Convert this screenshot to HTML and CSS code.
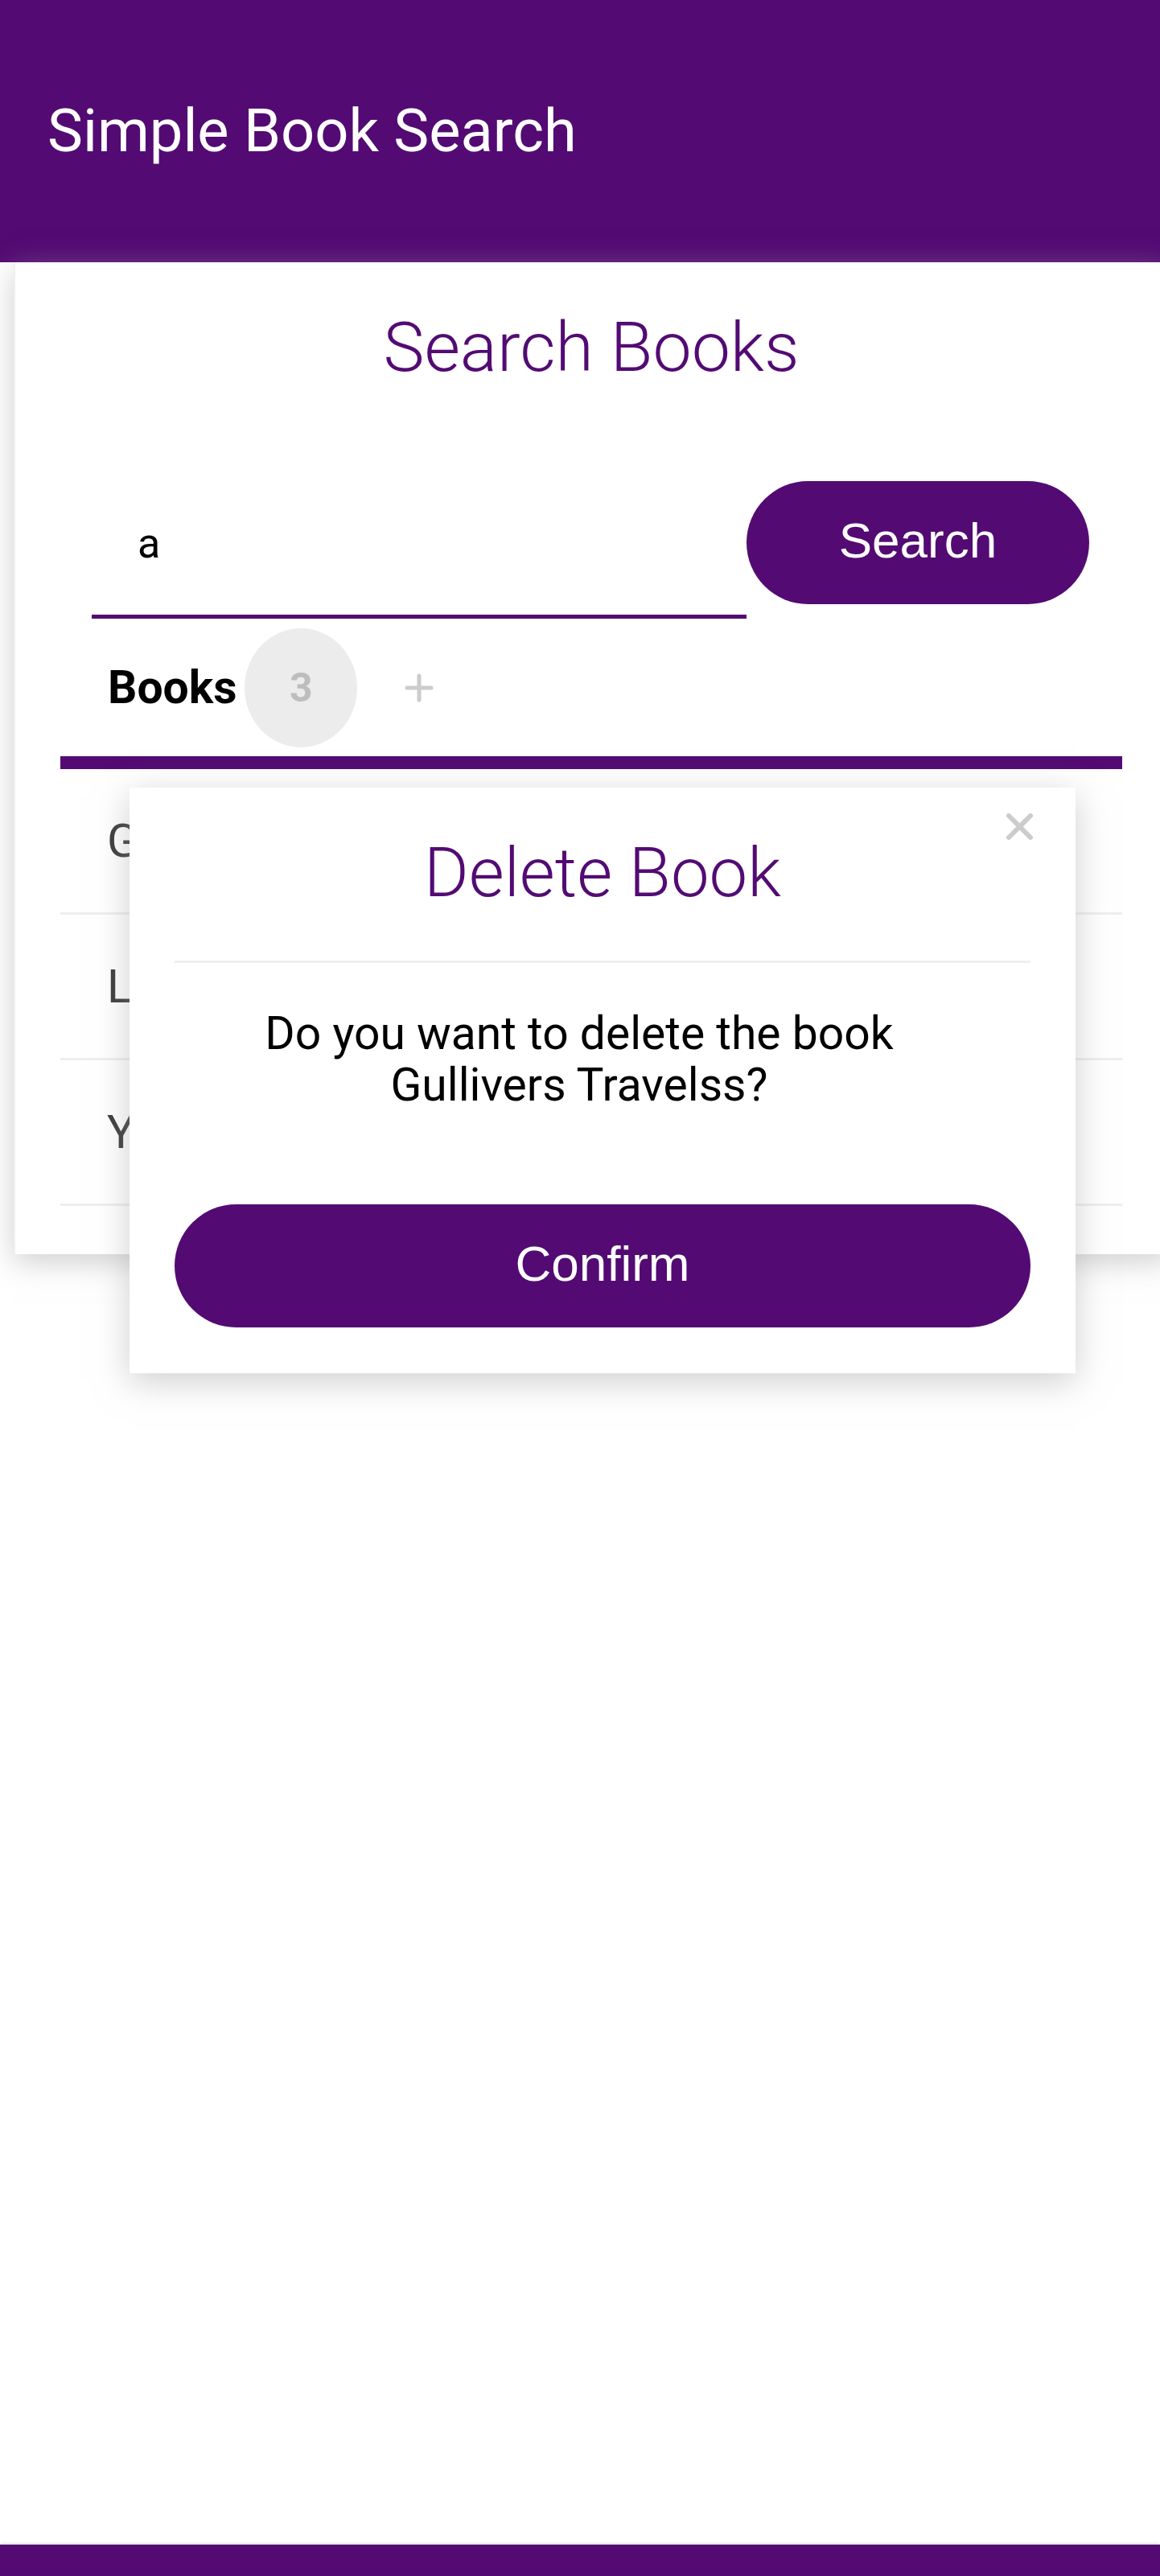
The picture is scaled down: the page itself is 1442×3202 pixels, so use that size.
FILE: index.html
```html
<!DOCTYPE html>
<html lang="en">
<head>
<meta charset="utf-8">
<title>Simple Book Search</title>
<link rel="stylesheet" href="styles.css">
</head>
<body>
<div class="page">
  <header class="topbar">
    <h1 class="app-title">Simple Book Search</h1>
  </header>

  <main class="card">
    <h2 class="card-title">Search Books</h2>
    <form class="search-row">
      <input class="search-input" type="text" value="a">
      <button class="pill-btn search-btn" type="button">Search</button>
    </form>

    <div class="tabs">
      <span class="tab-label">Books</span>
      <span class="badge">3</span>
      <span class="tab-add">
        <svg width="36" height="36" viewBox="0 0 36 36"><path d="M18 3v30M3 18h30" stroke="#cccccc" stroke-width="5" stroke-linecap="round" fill="none"/></svg>
      </span>
    </div>
    <div class="tab-indicator"></div>

    <ul class="book-list">
      <li class="book-row">Gullivers Travelss</li>
      <li class="book-row">Les Miserables</li>
      <li class="book-row">Yellow Crayon</li>
    </ul>
  </main>

  <div class="modal">
    <button class="modal-close" type="button" aria-label="Close">
      <svg width="35" height="35" viewBox="0 0 35 35"><path d="M4 4l27 27M31 4L4 31" stroke="#cccccc" stroke-width="6" stroke-linecap="round" fill="none"/></svg>
    </button>
    <h3 class="modal-title">Delete Book</h3>
    <hr class="modal-divider">
    <p class="modal-message">Do you want to delete the book<br>Gullivers Travelss?</p>
    <button class="pill-btn confirm-btn" type="button">Confirm</button>
  </div>

  <footer class="bottombar"></footer>
</div>
</body>
</html>
```

FILE: styles.css
```css
html, body {
  margin: 0;
  padding: 0;
  background: #ffffff;
  overflow-x: hidden;
}

body {
  font-family: Roboto, "Noto Sans", sans-serif;
}

.page {
  position: relative;
  min-height: 3202px;
  display: flex;
  flex-direction: column;
}

.topbar {
  height: 326px;
  background: #530b73;
  display: flex;
  align-items: center;
  padding-left: 59px;
  box-sizing: border-box;
}

.app-title {
  margin: 0;
  font-family: Roboto, sans-serif;
  font-weight: 400;
  font-size: 74px;
  color: #ffffff;
  line-height: 1;
}

.card {
  width: 1436px;
  margin-left: 17px;
  box-sizing: border-box;
  padding: 62px 58px 60px 56px;
  background: #ffffff;
  border-left: 2px solid #efefef;
  box-shadow: 0 10px 34px rgba(170, 170, 170, 0.55);
}

.card-title {
  margin: 0;
  text-align: center;
  font-family: Roboto, sans-serif;
  font-weight: 300;
  font-size: 86px;
  line-height: 87px;
  color: #530b73;
}

.search-row {
  margin: 123px 41px 0 39px;
  display: flex;
  align-items: flex-start;
}

.search-input {
  flex: 1;
  height: 171px;
  box-sizing: border-box;
  border: none;
  border-bottom: 5px solid #530b73;
  padding: 0 0 12px 57px;
  margin: 0;
  font-family: Roboto, sans-serif;
  font-size: 52px;
  color: #000000;
  background: transparent;
  outline: none;
}

.pill-btn {
  height: 153px;
  border: none;
  border-radius: 77px;
  background: #530b73;
  color: #ffffff;
  font-family: "Liberation Sans", Arial, sans-serif;
  font-size: 62px;
  padding: 0 0 6px;
  margin: 0;
  cursor: pointer;
}

.search-btn {
  width: 426px;
  flex: none;
}

.tabs {
  height: 171px;
  display: flex;
  align-items: center;
  padding-left: 59px;
}

.tab-label {
  font-family: Roboto, sans-serif;
  font-weight: 700;
  font-size: 57px;
  color: #000000;
}

.badge {
  width: 140px;
  height: 148px;
  margin-left: 10px;
  border-radius: 50%;
  background: #ececec;
  color: #bdbdbd;
  font-family: Roboto, sans-serif;
  font-weight: 700;
  font-size: 50px;
  display: flex;
  align-items: center;
  justify-content: center;
}

.tab-add {
  margin-left: 59px;
  display: flex;
}

.tab-indicator {
  height: 16px;
  background: #530b73;
}

.book-list {
  list-style: none;
  margin: 0;
  padding: 0;
}

.book-row {
  height: 181px;
  box-sizing: border-box;
  border-bottom: 3px solid #eeeeee;
  display: flex;
  align-items: center;
  padding-left: 58px;
  font-family: Roboto, sans-serif;
  font-size: 58px;
  color: #3a3a3a;
}

.modal {
  position: absolute;
  left: 161px;
  top: 979px;
  width: 1176px;
  box-sizing: border-box;
  padding: 0 56px 57px;
  background: #ffffff;
  box-shadow: 0 10px 40px rgba(160, 160, 160, 0.5);
  display: flex;
  flex-direction: column;
}

.modal-close {
  position: absolute;
  top: 31px;
  right: 52px;
  width: 35px;
  height: 35px;
  padding: 0;
  border: none;
  background: none;
  display: flex;
}

.modal-title {
  margin: 63px 0 0;
  text-align: center;
  font-family: Roboto, sans-serif;
  font-weight: 300;
  font-size: 85px;
  line-height: 86px;
  color: #530b73;
}

.modal-divider {
  margin: 66px 0 0;
  border: none;
  height: 3px;
  background: #eeeeee;
}

.modal-message {
  margin: 56px 0 0;
  padding-right: 58px;
  text-align: center;
  font-family: Roboto, sans-serif;
  font-size: 57px;
  line-height: 64px;
  color: #000000;
}

.confirm-btn {
  margin-top: 116px;
  width: 100%;
}

.bottombar {
  margin-top: auto;
  height: 39px;
  background: #530b73;
  box-shadow: 0 -1px 3px rgba(200, 200, 200, 0.9);
}
```
